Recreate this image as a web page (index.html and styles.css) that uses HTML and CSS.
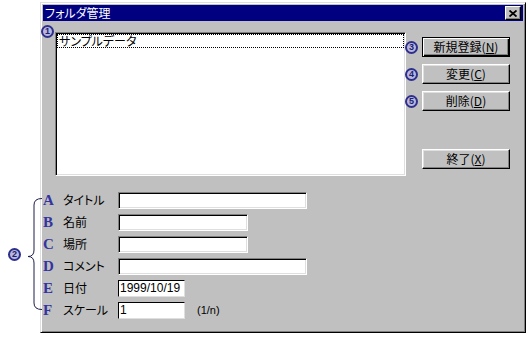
FILE: index.html
```html
<!DOCTYPE html>
<html lang="ja">
<head>
	<meta charset="UTF-8">
	<title>フォルダ管理</title>
	<link rel="stylesheet" href="styles.css">
</head>
<body>
	<div class="stage">
		<div class="side">
			<span class="mark mark-group">2</span>
			<svg class="brace" width="22" height="113" viewBox="0 0 22 113">
				<path d="M22,0.5 Q14,0.5 14,7 L14,52 Q14,58.5 8,58.5 Q14,58.5 14,65 L14,105 Q14,111.5 22,111.5" fill="none" stroke="#1c1c48" stroke-width="1"/>
			</svg>
		</div>

		<div class="window">
			<div class="titlebar">
				<span class="title">フォルダ管理</span>
				<span class="close-btn">
					<svg width="8" height="7" viewBox="0 0 8 7">
						<path d="M0.5,0.5 L7.5,6.5 M7.5,0.5 L0.5,6.5" stroke="#000" stroke-width="1.8"/>
					</svg>
				</span>
			</div>

			<div class="client">
				<div class="top-row">
					<span class="mark mark-list">1</span>
					<div class="listbox">
						<div class="list-item">サンプルデータ</div>
					</div>
					<div class="actions">
						<div class="action action-new">
							<span class="mark">3</span>
							<button class="btn btn-default">新規登録(<u>N</u>)</button>
						</div>
						<div class="action">
							<span class="mark">4</span>
							<button class="btn">変更(<u>C</u>)</button>
						</div>
						<div class="action">
							<span class="mark">5</span>
							<button class="btn">削除(<u>D</u>)</button>
						</div>
						<div class="action action-end">
							<span class="mark-space"></span>
							<button class="btn">終了(<u>X</u>)</button>
						</div>
					</div>
				</div>

				<div class="form">
					<div class="row">
						<span class="key">A</span>
						<label for="fTitle">タイトル</label>
						<input type="text" class="field field-long" id="fTitle">
					</div>
					<div class="row">
						<span class="key">B</span>
						<label for="fName">名前</label>
						<input type="text" class="field field-mid" id="fName">
					</div>
					<div class="row">
						<span class="key">C</span>
						<label for="fPlace">場所</label>
						<input type="text" class="field field-mid" id="fPlace">
					</div>
					<div class="row">
						<span class="key">D</span>
						<label for="fComment">コメント</label>
						<input type="text" class="field field-long" id="fComment">
					</div>
					<div class="row">
						<span class="key">E</span>
						<label for="fDate">日付</label>
						<input type="text" class="field field-short field-thin" id="fDate" value="1999/10/19">
					</div>
					<div class="row">
						<span class="key">F</span>
						<label for="fScale">スケール</label>
						<input type="text" class="field field-short field-thin" id="fScale" value="1">
						<span class="unit">(1/n)</span>
					</div>
				</div>
			</div>
		</div>
	</div>
</body>
</html>
```

FILE: styles.css
```css
body {
	margin: 0;
	background-color: #fff;
	font-family: "Noto Sans CJK JP", sans-serif;
	font-size: 12px;
	color: #000;
}

.stage {
	display: flex;
	width: 531px;
	height: 337px;
	padding-top: 2px;
	box-sizing: border-box;
}

/* annotation to the left of the window */
.side {
	display: flex;
	align-items: center;
	align-self: flex-start;
	width: 40px;
	flex-shrink: 0;
	margin-top: 196px;
	padding-left: 8px;
	box-sizing: border-box;
	position: relative;
	z-index: 2;
}

.brace {
	flex-shrink: 0;
	overflow: visible;
}

/* circled number markers */
.mark {
	display: flex;
	align-items: center;
	justify-content: center;
	width: 13px;
	height: 13px;
	flex-shrink: 0;
	box-sizing: border-box;
	border: 2px solid #2e2e8c;
	border-radius: 50%;
	background-color: #b8b8de;
	font-family: "Liberation Sans", sans-serif;
	font-size: 9px;
	line-height: 9px;
	font-weight: bold;
	color: #20206e;
	position: relative;
	z-index: 2;
}

.mark-group {
	margin-right: -1px;
}

/* window */
.window {
	width: 486px;
	height: 331px;
	box-sizing: border-box;
	background-color: #c0c0c0;
	border: 1px solid;
	border-color: #dfdfdf #000 #000 #dfdfdf;
	box-shadow: inset 1px 1px #fff, inset -1px -1px #808080;
	padding: 2px;
	flex-shrink: 0;
}

.titlebar {
	display: flex;
	align-items: center;
	justify-content: space-between;
	height: 16px;
	background-color: #000080;
	padding: 0 2px 0 2px;
}

.title {
	color: #fff;
	font-size: 12px;
	line-height: 14px;
	font-feature-settings: "palt";
}

.close-btn {
	display: flex;
	align-items: center;
	justify-content: center;
	width: 16px;
	height: 14px;
	box-sizing: border-box;
	background-color: #c0c0c0;
	border: 1px solid;
	border-color: #fff #000 #000 #fff;
	box-shadow: inset -1px -1px #808080;
}

.top-row {
	display: flex;
	align-items: flex-start;
	margin-top: 11px;
}

.mark-list {
	margin-left: -2px;
	margin-top: -7px;
}

.listbox {
	width: 351px;
	height: 144px;
	margin-left: 1px;
	box-sizing: border-box;
	background-color: #fff;
	border: 1px solid;
	border-color: #808080 #fff #fff #808080;
	box-shadow: inset 1px 1px #000, inset -1px -1px #dfdfdf;
	padding: 1px;
}

.list-item {
	height: 14px;
	box-sizing: border-box;
	border: 1px dotted #000;
	padding-left: 1px;
	line-height: 12px;
	font-feature-settings: "palt";
	white-space: nowrap;
}

.actions {
	display: flex;
	flex-direction: column;
	margin-left: -1px;
}

.action {
	display: flex;
	align-items: center;
	margin-top: 7px;
}

.action .mark,
.mark-space {
	margin-right: 4px;
}

.mark-space {
	width: 13px;
}

.action-new {
	margin-top: 5px;
}

.action-end {
	margin-top: 38px;
}

.btn {
	width: 88px;
	height: 20px;
	box-sizing: border-box;
	padding: 0;
	background-color: #c0c0c0;
	border: 1px solid;
	border-color: #fff #000 #000 #fff;
	box-shadow: inset -1px -1px #808080, inset 1px 1px #dfdfdf;
	font-family: "Noto Sans CJK JP", sans-serif;
	font-size: 12px;
	line-height: 14px;
	color: #000;
}

.btn-default {
	border-color: #000;
	box-shadow: inset 1px 1px #fff, inset -1px -1px #000, inset -2px -2px #808080;
}

/* fields */
.form {
	margin-top: 13px;
}

.row {
	display: flex;
	align-items: center;
	height: 22px;
}

.key {
	width: 20px;
	font-family: "Liberation Serif", serif;
	font-weight: bold;
	font-size: 15px;
	line-height: 14px;
	color: #3434a0;
}

.row label {
	width: 55px;
	font-feature-settings: "palt";
	line-height: 14px;
}

.field {
	height: 17px;
	box-sizing: border-box;
	margin: 0;
	padding: 0 1px;
	background-color: #fff;
	border: 1px solid;
	border-color: #808080 #fff #fff #808080;
	box-shadow: inset 1px 1px #000, inset -1px -1px #dfdfdf;
	font-family: "Liberation Sans", sans-serif;
	font-size: 12px;
	color: #000;
	outline: none;
}

.field-long {
	width: 189px;
}

.field-mid {
	width: 130px;
}

.field-short {
	width: 67px;
}

.field-thin {
	border-color: #000 #dfdfdf #dfdfdf #000;
	box-shadow: inset -1px -1px #fff;
}

.unit {
	margin-left: 12px;
	font-family: "Liberation Sans", sans-serif;
	font-size: 11px;
}
```
